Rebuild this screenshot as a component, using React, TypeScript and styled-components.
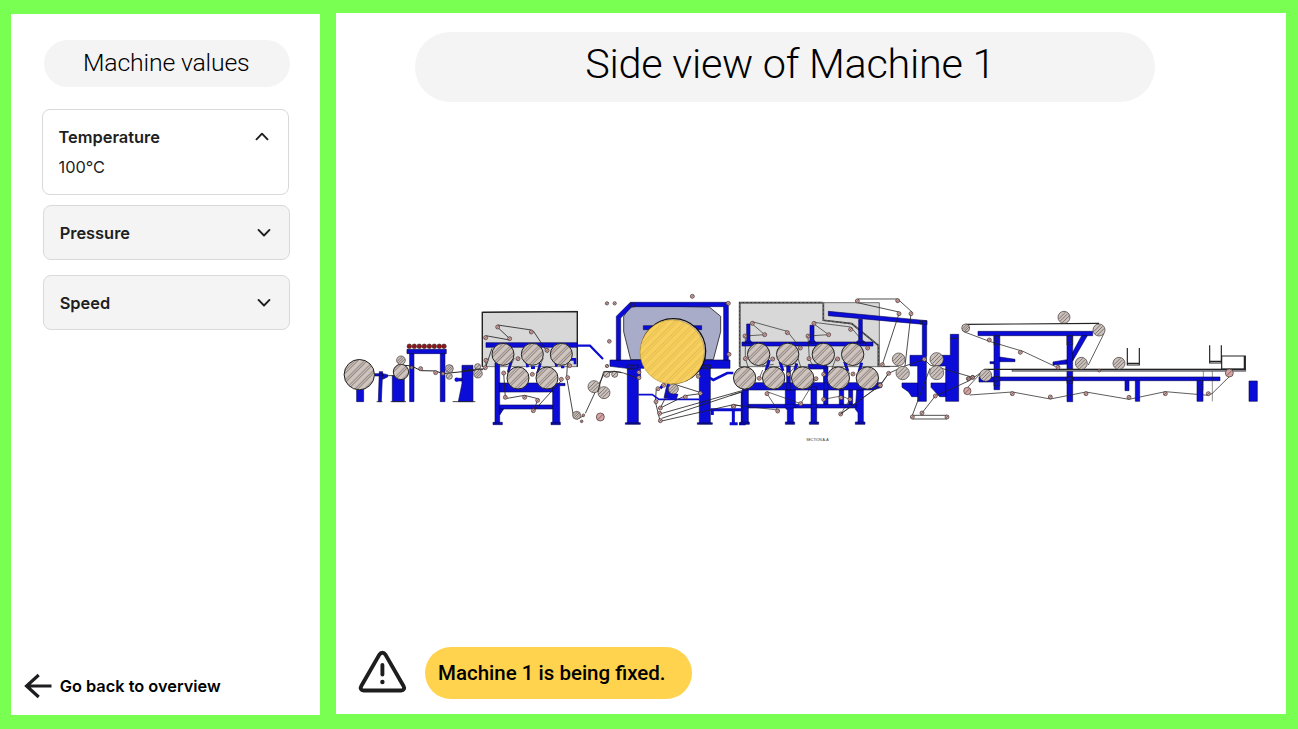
import React from "react";
import styled, { createGlobalStyle } from "styled-components";

const GlobalStyle = createGlobalStyle`
  * { box-sizing: border-box; }
  body { margin: 0; background: #78ff52; }
`;

const Page = styled.main`
  display: grid;
  grid-template-columns: 308.7px 950px;
  column-gap: 16px;
  width: 1298px;
  height: 729px;
  padding: 13px 12px 14px 11.3px;
  background: #78ff52;
  overflow: hidden;
`;

const Sidebar = styled.aside`
  display: flex;
  flex-direction: column;
  height: 701px;
  margin-top: 1px;
  padding: 25.5px 29px 15px 31.2px;
  background: #fff;
`;

const Main = styled.section`
  display: flex;
  flex-direction: column;
  height: 701px;
  padding-top: 19px;
  background: #fff;
`;

const SidebarTitle = styled.h2`
  width: 246px;
  height: 47px;
  margin: 0 0 22px 1.3px;
  padding-right: 1px;
  border-radius: 24px;
  background: #f4f4f4;
  font: 300 24.8px/46px Roboto, sans-serif;
  letter-spacing: -0.17px;
  color: #000;
  text-align: center;
  white-space: nowrap;
`;

const PageTitle = styled.h1`
  width: 740.5px;
  height: 70px;
  margin: 0 0 0 79px;
  padding-left: 10px;
  border-radius: 35px;
  background: #f4f4f4;
  font: 300 41.4px/65px Roboto, sans-serif;
  letter-spacing: -0.27px;
  color: #000;
  text-align: center;
  white-space: nowrap;
`;

const Accordion = styled.div<{ $open?: boolean; $gap: number }>`
  flex: none;
  width: 247px;
  height: ${(p) => (p.$open ? 86 : 55)}px;
  margin: 0 0 ${(p) => p.$gap}px ${(p) => (p.$open ? -0.3 : 0.9)}px;
  padding: 15px 15.3px 0;
  border: 1px solid #d9d9d9;
  border-radius: 8px;
  background: ${(p) => (p.$open ? "#fff" : "#f4f4f4")};
  color: #1e1e1e;
  font: 400 16.4px/24px Inter, sans-serif;
`;

const AccordionHead = styled.div`
  display: flex;
  align-items: center;
  justify-content: space-between;
  padding-right: 3.5px;
  font-weight: 600;
`;

const AccordionBody = styled.div`
  margin-top: 6.5px;
`;

const BackLink = styled.a`
  display: flex;
  align-items: center;
  gap: 7px;
  margin: auto 0 0 -18.8px;
  color: #000;
  font: 600 16.35px/28px Inter, sans-serif;
  white-space: nowrap;
`;

const Drawing = styled.svg`
  display: block;
  flex: none;
  width: 950px;
  height: 170px;
  margin-top: 178px;
`;

const StatusBar = styled.div`
  display: flex;
  align-items: center;
  gap: 18px;
  margin: auto 0 15px 22px;
`;

const StatusBadge = styled.div`
  width: 267px;
  height: 52px;
  padding-left: 13px;
  border-radius: 26px;
  background: #ffd34d;
  color: #000;
  font: 500 20.5px/52px Roboto, sans-serif;
  white-space: nowrap;
`;

const Chevron = ({ up }: { up?: boolean }) => (
  <svg width="14" height="10" viewBox="0 0 14 10" fill="none" stroke="#1e1e1e" strokeWidth="1.9" strokeLinecap="round" strokeLinejoin="round">
    <path d={up ? "M1.5 7.3 7 1.7l5.500 5.600" : "M1.5 1.9 7 7.500l5.500-5.600"} />
  </svg>
);

const BackArrow = () => (
  <svg width="29" height="28" viewBox="0 0 29 28" fill="none" stroke="#1e1e22" strokeWidth="3.2">
    <path d="M14.7 3 2.6 14l12.1 11M2.6 14H27.5" />
  </svg>
);

const WarningIcon = () => (
  <svg width="49" height="46" viewBox="0 0 49 46" fill="none" stroke="#1e1e1e" strokeWidth="3.9" strokeLinecap="round" strokeLinejoin="round">
    <path d="M21.500 4.400 3.300 36c-1.400 2.400-.2 4.500 2.300 4.500h37.600c2.500 0 3.700-2.100 2.300-4.500L27.300 4.400c-1.400-2.300-4.400-2.300-5.800 0Z" />
    <path d="M24.400 15v9.500" />
    <circle cx="24.400" cy="32" r="2.200" fill="#1e1e1e" stroke="none" />
  </svg>
);

type P = [number, number, number?];

const Rollers = ({ at, r = 6, kind = "pink" }: { at: P[]; r?: number; kind?: "pink" | "steel" | "big" | "red" }) => (
  <g stroke={kind === "big" ? "#222" : "#39302e"} strokeWidth={kind === "big" ? 3 : 2}>
    {at.map(([x, y, own], i) => {
      const s = own ?? r;
      return (
        <g key={i}>
          <circle
            cx={x}
            cy={y}
            r={s}
            fill={kind === "big" ? "url(#hatch)" : kind === "steel" ? "#cbc1bc" : kind === "red" ? "#a01016" : "#d7a5a3"}
          />
          {kind !== "big" && <path d={`M${x - s * 0.6} ${y + s * 0.6}L${x + s * 0.6} ${y - s * 0.6}`} strokeWidth="1.6" />}
          {kind === "steel" && s > 10 && (
            <path d={`M${x - s * 0.85} ${y + s * 0.25}L${x + s * 0.25} ${y - s * 0.85}M${x - s * 0.25} ${y + s * 0.85}L${x + s * 0.85} ${y - s * 0.25}`} strokeWidth="1.6" />
          )}
        </g>
      );
    })}
  </g>
);

const Steel = ({ d }: { d: string }) => <path d={d} fill="#0c0cd8" stroke="#08084f" strokeWidth="1.8" />;
const Web = ({ d, w = 2 }: { d: string; w?: number }) => <path d={d} fill="none" stroke="#222" strokeWidth={w} />;
const Bar = ({ d, w }: { d: string; w: number }) => <path d={d} fill="none" stroke="#0c0cd0" strokeWidth={w} />;
const Section = ({ x, y, children }: { x: number; y: number; children: React.ReactNode }) => (
  <g transform={`translate(${x} ${y}) scale(.33333)`}>{children}</g>
);

const Unwinder = () => (
  <Section x={336.3} y={330.3}>
    <Steel d="M61 176h21v38H61ZM115 130h25v7h-25ZM129 124h10l-4 90h-9ZM139 130l15 3v7l-15 7ZM168 136h36v78h-36ZM212 57h118v13H212ZM220 70h13v144h-13ZM312 70h14v144h-14ZM377 105h33v109h-44l11-54ZM360 144h17v8h-17Z" />
    <circle cx="361" cy="148" r="6.5" fill="#0c0cd8" />
    <Web d="M152 136h25M121 214h17M163 214h46M349 214h68M377 121h33M380 120l12-14M394 120l12-14" w={2.5} />
    <Web d="M204 105l22 2 27 14 44 1 23 8 120-12" w={3} />
    <Rollers kind="red" r={6.8} at={[[219, 48], [234, 48], [249, 48], [264, 48], [279, 48], [294, 48], [309, 48], [323, 48]]} />
    <Rollers kind="big" at={[[69, 133, 45.5], [194, 125, 23]]} />
    <Rollers kind="steel" at={[[194, 90, 13], [339, 115, 12], [339, 138, 9], [424, 109, 9], [425, 130, 13]]} />
    <Rollers at={[[226, 112, 4], [253, 115], [298, 127], [320, 130, 5]]} />
  </Section>
);

const FirstPress = () => (
  <Section x={470} y={290}>
    <path d="M37 66 322 64V230H37Z" fill="#d8d8d8" stroke="#444" strokeWidth="2" />
    <path d="M37 230V67L322 65V230" fill="none" stroke="#222" strokeWidth="4" />
    <Steel d="M48 158h274v14H48ZM75 218h14v182H75ZM88 279h160v27H88ZM88 345h160v12H88ZM248 280h37v7h-16v113h-21ZM69 397h28v7H69ZM243 397h28v7h-28ZM89 357h12l-12 18Z" />
    <Bar d="M322 167h38l39 40" w={6.5} />
    <Bar d="M124 210l-9 36M163 172l10 60M211 220l-8 30M248 180l12 50M183 233h12M273 231h10M300 208h15v15" w={8} />
    <Web d="M83 105l101 15M190 123l43 65M83 112l36 34M47 137l72 13M48 211v22M46 235l20-60M0 239l46-3M101 249l5 73M106 326l58-10 39 10M203 331l-12 29M190 364l84-92M304 190l-12 36-2 36 20 115 12 10 20-10M346 370l38-82 18-36 32-8 20 3" w={2.5} />
    <Web d="M133 204l-22 48M220 204l-22 48" />
    <Rollers kind="big" r={33} at={[[99, 193], [187, 193], [274, 193], [144, 264], [231, 264]]} />
    <Rollers kind="steel" at={[[410, 253, 9], [434, 253, 9], [372, 290, 18], [402, 308, 18], [320, 376, 12]]} />
    <Rollers at={[[83, 111], [184, 126], [119, 146], [47, 143], [48, 211], [46, 233], [144, 206], [231, 181], [101, 249], [187, 253], [274, 268], [293, 263], [299, 227], [106, 322], [164, 322], [203, 331], [190, 362], [411, 40, 5], [434, 40, 5], [418, 154, 5.5], [411, 228, 5], [340, 376, 4], [335, 394, 4], [391, 381, 12]]} />
  </Section>
);

const YankeeCylinder = () => (
  <Section x={595} y={285}>
    <path d="M107 62 343 66l34 28v46l-22 84H107L86 140V94Z" fill="#a9acc8" stroke="#222" strokeWidth="2.5" />
    <Steel d="M64 94l42-42h294v174h-14V65H111L77 99v127H64ZM145 122h175v12H145ZM45 225h102v25H95l-50-6ZM313 225h92v25h-92ZM97 240h33v176H97ZM313 240h33v176h-33ZM91 413h45v5H91ZM307 413h45v5h-45ZM219 286l-12 52 36 7 6-17-14-3Z" />
    <Web d="M97 241h20v12H97ZM98 252l16-10M328 241h20v10h-20ZM330 250l16-9M107 54h12v12h-12ZM386 54v12" />
    <Bar d="M130 329h42l20 14h121" w={5} />
    <Bar d="M343 278l12 7 42-21h18" w={8} />
    <Bar d="M346 374h96M352 370v20M415 374v40M404 416h24M442 320v96M432 416h20M204 300l-8 10M133 250v30" w={9} />
    <Web d="M8 320l18-60q30-4 60 4l46 18M236 297l82 26M184 311l-3 39 14 57M231 300l-35 69 75-37 45-6M194 387l247-70M200 400l242-80M196 409l219-50 30 5" w={2.5} />
    <circle cx="235" cy="198" r="97" fill="#cfc4be" stroke="#111" strokeWidth="4" />
    <circle cx="231.5" cy="201" r="96.5" fill="url(#goldHatch)" stroke="#a58535" strokeWidth="1.5" />
    <Rollers kind="steel" at={[[235, 312, 15]]} />
    <Rollers at={[[132, 262], [132, 278], [310, 274], [189, 311], [206, 301], [183, 350], [196, 369], [194, 385], [196, 407], [271, 336], [316, 325], [415, 364], [400, 55], [402, 208], [292, 34]]} />
  </Section>
);

const SecondPress = () => (
  <Section x={730} y={290}>
    <path d="M29 38h419v192H29Z" fill="#d8d8d8" stroke="#333" strokeWidth="2" />
    <path d="M280 38v53l85 10 80 65v64M278 38H29v192" fill="none" stroke="#333" strokeWidth="5" />
    <path d="M280 38v53l85 10 80 65v64M278 38H29v192" fill="none" stroke="#aaa" strokeWidth="1.5" strokeDasharray="8 4" />
    <Steel d="M36 156h393v12H36ZM50 102h10v48l8 10H42l8-10ZM240 106h12v44l8 10h-28l8-10ZM386 88h11v62l12 9h-33l10-9ZM30 278h425v14l-25 8H38ZM37 300h18v100H37ZM166 300h30v53h-6v47h-18v-39l-6-8ZM243 290h17v110h-17ZM380 300h20v100h-16v-32l-8-10ZM54 343h326v11H54ZM281 230h13v113h-13ZM328 300h13v43h-13ZM356 300h12v43h-12ZM32 396h26v7H32ZM166 396h28v7h-28ZM238 396h28v7h-28ZM376 396h29v7h-29ZM170 228h11v72h-11ZM235 223h55v14h-55Z" />
    <Bar d="M118 210l-10 32M150 215l9 28M200 220l-6 28M344 215l9 28M395 218l-8 28" w={9} />
    <Web d="M67 95l105 29 39 50M67 102l37 32-59 4M46 140v66l17 50M258 266l-46 75-101-36M111 311l32 49-130-15M252 97l110 14 51 60M252 102l44 32-62 4M234 140l4 66M237 206l17 30M281 253v75l52-10 27 10-28 44 118-86M450 286l26-36M0 317l38-12M98 240l-10 25M201 222l-26 31M204 205l9 28M318 205l-12 30M345 220l14 32M96 228l35-5M448 230h32" />
    <Rollers kind="big" r={33.5} at={[[86, 193], [173, 193], [280, 193], [368, 193], [44, 264], [131, 264], [218, 264], [325, 264], [412, 264]]} />
    <Rollers at={[[67, 100], [104, 134], [45, 138], [172, 128], [211, 174], [46, 206], [128, 207], [88, 265], [175, 253], [258, 266], [252, 100], [296, 134], [234, 138], [362, 118], [413, 174], [237, 206], [323, 207], [281, 253], [369, 252], [450, 286], [111, 311], [212, 341], [143, 363], [11, 349], [281, 328], [333, 323], [360, 328], [332, 372]]} />
    <text x="262" y="452" textAnchor="middle" textLength="67" lengthAdjust="spacingAndGlyphs" fontFamily="Liberation Sans, sans-serif" fontSize="10" fill="#333">SECTION A-A</text>
  </Section>
);

const Calender = () => (
  <Section x={850} y={290}>
    <Steel d="M-65 64 231 92v12L-65 77ZM217 92h13v106h-1v136h-26V228h-23v-32h37ZM156 279h47v41h-18l-9-14-20-14ZM301 133h25v201h-39V228h-20v-32h34ZM243 279h44v41h-18l-26-28Z" />
    <Web d="M301 145h25M212 91v12M214 102l12-10" w={2.5} />
    <Web d="M22 27h121l43 39M183 71l-18 157M22 38l125 28M147 71L97 224M97 229h49M91 286l25-36 49-22 58-20 17 17 128 37M-28 372 91 286M240 235l-53 141h104M187 387h104M216 369l40-51 100-45 50-34" w={2.4} />
    <Rollers kind="steel" at={[[146, 208, 19], [158, 249, 20], [260, 208, 20], [260, 248, 21]]} />
    <Rollers at={[[22, 33], [143, 32], [147, 71], [183, 71], [97, 224], [223, 208], [116, 250], [91, 286], [355, 266], [368, 262], [256, 318], [216, 369], [187, 381], [291, 381]]} />
  </Section>
);

const Reel = () => (
  <Section x={955} y={300}>
    <Steel d="M69 94h344v13H69ZM117 107h17v162h-17ZM336 107h17v198h-17ZM380 107h17l-44 76v-26ZM134 171l46 7v7h-46ZM105 185h12v6h-12ZM294 186l42-7v13l-42 3ZM72 231h723v11H117v4H72Z" />
    <Web d="M117 107h17v28h-17ZM118 132l15-23M117 230h17v28h-17ZM118 256l15-24M336 107h17v28h-17ZM337 133l15-24M336 230h17v20h-17ZM337 248l15-17" />
    <path d="M171 208h701v6H171Z" fill="#8b8d99" stroke="#222" strokeWidth="1.5" />
    <Web d="M32 73l142-1 258-2M88 208h784" w={3.4} />
    <Web d="M26 95l77 29 101 30 98 46M447 100l-47 95M88 208l-50 54M44 285l128-9 114 21 107-21 129 22 109-23 129 11 12-6 53-52" w={2.2} />
    <Rollers kind="steel" r={18} at={[[327, 52], [432, 90], [379, 190], [92, 226], [492, 190]]} />
    <Rollers kind="steel" at={[[32, 84, 12]]} />
    <Rollers at={[[103, 120], [196, 157], [309, 202], [433, 212, 4], [41, 236, 5], [53, 232, 5], [172, 281], [286, 291], [393, 281], [37, 273, 11]]} />
  </Section>
);

const Delivery = () => (
  <Section x={1100} y={330}>
    <Steel d="M75 151h12v31H75ZM106 151h13v63h-13ZM291 151h18v63h-18ZM447 153h25v61h-25Z" />
    <Web d="M82 54v51h36V54M82 100h36M329 46v53h35V46M329 94h35M365 78h71v39h-71ZM433 78v39" w={3.5} />
    <Web d="M310 124v26M337 124v90M291 151h18v30h-18M293 178l15-24" w={1.5} />
    <Rollers at={[[388, 129, 12], [87, 202], [196, 191], [325, 191]]} />
  </Section>
);

const MachineDrawing = () => (
  <Drawing viewBox="336 280 950 170" role="img" aria-label="Machine 1 side view">
    <defs>
      <pattern id="hatch" width="20" height="20" patternUnits="userSpaceOnUse" patternTransform="rotate(45)">
        <rect width="20" height="20" fill="#cfc4be" />
        <path d="M4 0v20M10 0v20" stroke="#5b5450" strokeWidth="1.6" />
      </pattern>
      <pattern id="goldHatch" width="22" height="22" patternUnits="userSpaceOnUse" patternTransform="rotate(45)">
        <rect width="22" height="22" fill="#f8d05e" />
        <path d="M4 0v22M11 0v22" stroke="#d0a945" strokeWidth="1.5" />
      </pattern>
    </defs>
    <Unwinder />
    <FirstPress />
    <YankeeCylinder />
    <SecondPress />
    <Calender />
    <Reel />
    <Delivery />
  </Drawing>
);

export default function App() {
  return (
    <>
      <GlobalStyle />
      <Page>
        <Sidebar>
          <SidebarTitle>Machine values</SidebarTitle>
          <Accordion $open $gap={10}>
            <AccordionHead>Temperature<Chevron up /></AccordionHead>
            <AccordionBody>100°C</AccordionBody>
          </Accordion>
          <Accordion $gap={15.2}>
            <AccordionHead>Pressure<Chevron /></AccordionHead>
          </Accordion>
          <Accordion $gap={0}>
            <AccordionHead>Speed<Chevron /></AccordionHead>
          </Accordion>
          <BackLink><BackArrow />Go back to overview</BackLink>
        </Sidebar>
        <Main>
          <PageTitle>Side view of Machine 1</PageTitle>
          <MachineDrawing />
          <StatusBar>
            <WarningIcon />
            <StatusBadge>Machine 1 is being fixed.</StatusBadge>
          </StatusBar>
        </Main>
      </Page>
    </>
  );
}
